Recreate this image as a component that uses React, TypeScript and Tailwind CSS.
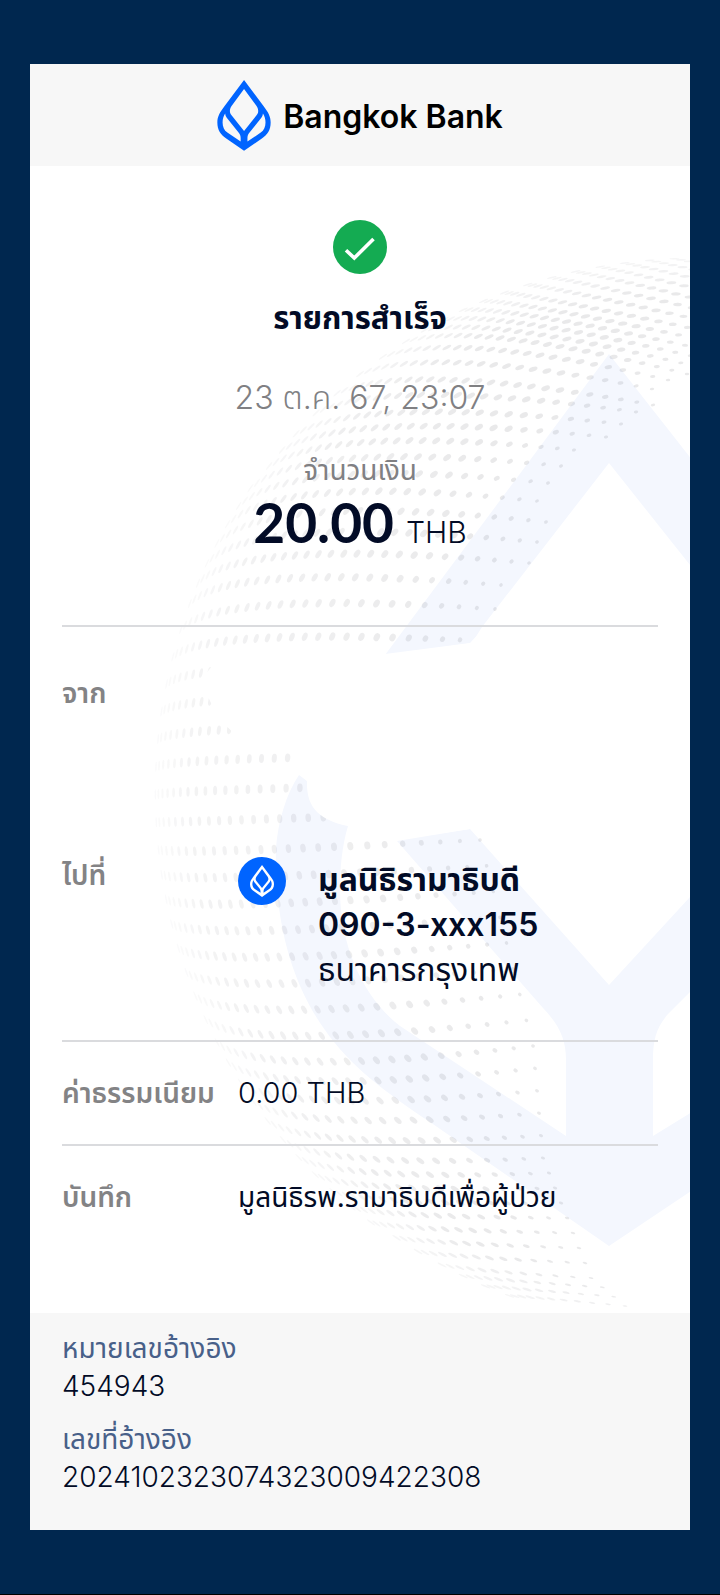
import React from "react";

const LOTUS =
  "M26.7 0 L46.5 26.5 C51 32.5 53.3 36.5 53.3 42.5 C53.3 50 50 54.8 44.5 58.5 L26.7 70.8 L8.9 58.5 C3.4 54.8 0 50 0 42.5 C0 36.5 2.4 32.5 6.9 26.5 Z " +
  "M26.7 9 L14.2 26 C12 29.5 12 32.5 14.2 35.3 L26.7 51 L39.2 35.3 C41.4 32.5 41.4 29.5 39.2 26 Z " +
  "M7.8 33.5 C4 39.5 4.2 48.5 10 52.6 L23.3 61.6 L23.3 58 C23.3 55.6 22.6 54.2 21.2 52.4 L9.4 37.8 C8.4 36.4 7.9 35 7.8 33.5 Z " +
  "M45.6 33.5 C49.4 39.5 49.2 48.5 43.4 52.6 L30.1 61.6 L30.1 58 C30.1 55.6 30.8 54.2 32.2 52.4 L44 37.8 C45 36.4 45.5 35 45.6 33.5 Z";

function Lotus({ className }: { className: string }) {
  return (
    <svg viewBox="0 0 53.3 71" className={className} fill="currentColor" aria-hidden="true">
      <path fillRule="evenodd" d={LOTUS} />
    </svg>
  );
}

type Dot = { x: number; y: number; rx: number; ry: number; angle: number; opacity: number };

const CX = 690;
const CY = 793;
const R = 536;

/* Each row of the globe: [row, inner end x, inner end y, slope at the inner end, spacing]. */
const ANCHORS: number[][] = [
  [-14, 810, 278, 0.12, 17],
  [-1, 687, 374, 0.25, 16],
  [4, 621, 424, 0.16, 17],
  [13, 501, 585, 0.08, 18],
  [22, 480, 840, -0.05, 20],
  [30, 533, 1046, -0.12, 20],
  [35, 543, 1158, -0.05, 19],
  [43, 591, 1278, 0.06, 18],
  [46, 625, 1306, 0.1, 17],
];
/* Rim angle in degrees above (+) or below (-) the horizontal, per anchor row. */
const RIM = [90, 56, 40.5, 20, -6, -27, -39.5, -61, -70];
const ENDS: Record<number, [number, number]> = {
  0: [668, 380], 1: [652, 389], 2: [653, 405], 3: [636, 412], 4: [621, 424], 5: [606, 437],
  6: [574, 450], 7: [561, 466], 8: [548, 483], 9: [537, 501], 10: [546, 522], 11: [537, 542],
  12: [529, 563], 13: [501, 585], 14: [495, 609],
};
/* Below 1, dots stay further apart toward the rim. */
const SPREAD = 0.82;

function buildDots(): Dot[] {
  const dots: Dot[] = [];
  for (let row = -14; row <= 46; row++) {
    let a = 0;
    while (a < ANCHORS.length - 2 && row > ANCHORS[a + 1][0]) a++;
    const k = (row - ANCHORS[a][0]) / (ANCHORS[a + 1][0] - ANCHORS[a][0]);
    const mix = (i: number) => ANCHORS[a][i] + (ANCHORS[a + 1][i] - ANCHORS[a][i]) * k;
    const rim = ((RIM[a] + (RIM[a + 1] - RIM[a]) * k) * Math.PI) / 180;
    const [ex, ey] = ENDS[row] ?? [mix(1), mix(2)];
    const slope = mix(3);
    const x0 = CX - R * Math.cos(rim);
    const y0 = CY - R * Math.sin(rim);
    const tx = Math.sin(rim);
    const ty = -Math.cos(rim);
    const det = ty - slope * tx;
    let s = (ey + slope * (x0 - ex) - y0) / det;
    s = Math.max(row < 20 ? 8 : -120, Math.min(70, s));
    const x1 = x0 + tx * s;
    const y1 = y0 + ty * s;
    const n = Math.max(8, Math.round((2 * SPREAD * Math.hypot(ex - x1, ey - y1)) / mix(4)));
    for (let i = 0; i < n; i++) {
      const t = Math.pow(1 - i / n, SPREAD);
      const x = (1 - t) * (1 - t) * x0 + 2 * t * (1 - t) * x1 + t * t * ex;
      const y = (1 - t) * (1 - t) * y0 + 2 * t * (1 - t) * y1 + t * t * ey;
      const d = Math.hypot(x - CX, y - CY) / R;
      if (x > 700 || d > 0.998) continue;
      const grow = Math.min(1, 0.5 + i * 0.08);
      const depth = Math.sqrt(1 - d * d);
      const low = Math.max(0, Math.min(1, (x - 150) / 330));
      dots.push({
        x,
        y,
        rx: (0.5 + 3.3 * depth) * grow,
        ry: (2.6 + 2.4 * d) * grow,
        angle: (Math.atan2(y - CY, x - CX) * 180) / Math.PI,
        opacity: (0.07 + 0.08 * low) * Math.min(1, 0.4 + (1 - d) * 9),
      });
    }
  }
  return dots;
}

const DOTS = buildDots();

function Watermark() {
  return (
    <svg
      viewBox="30 166 660 1148"
      preserveAspectRatio="xMaxYMin slice"
      className="absolute inset-0 h-full w-full"
      aria-hidden="true"
    >
      <g fill="#f4f7fe">
        <path d="M609 354 L385 655 L472 643 L482 627 L609 463 L690 565 L700 578 L700 470 Z" />
        <path d="M299 775 C286 794 278 822 276 848 C274 930 296 990 325 1030 C350 1066 385 1092 430 1122 L609 1246 L700 1185 L700 1107 L653 1136 L653 1060 C653 1040 656 1028 668 1014 L700 982 L700 886 L609 985 L470 829 L397 841 L543 1008 C560 1026 566 1040 566 1060 L566 1136 L400 1026 C366 1000 340 950 340 890 C340 868 342 846 348 826 L307 781 Z" />
      </g>
      <g fill="#6b6b72">
        {DOTS.map((d, i) => (
          <ellipse
            key={i}
            cx={d.x.toFixed(1)}
            cy={d.y.toFixed(1)}
            rx={d.rx.toFixed(2)}
            ry={d.ry.toFixed(2)}
            opacity={d.opacity.toFixed(3)}
            transform={`rotate(${d.angle.toFixed(1)} ${d.x.toFixed(1)} ${d.y.toFixed(1)})`}
          />
        ))}
      </g>
      <path
        fill="#ffffff"
        d="M222 654 L385 654 L470 643 L510 600 L690 600 L690 829 L470 829 L397 840 L348 826 C320 820 306 808 307 781 L299 772 L290 742 L240 738 C215 720 203 690 204 676 Z"
      />
    </svg>
  );
}

const label = "w-44 shrink-0 text-[28px] leading-9 font-semibold text-[#838385]";

export default function App() {
  return (
    <div className="border-b border-black bg-[#00274f] px-[30px] pt-16 pb-16 font-['Inter','Noto_Sans_Thai',sans-serif] text-[#020b26]">
      <article className="bg-white">
        <header className="flex h-[102px] items-center justify-center gap-3 bg-[#f7f7f7]">
          <Lotus className="h-[71px] w-[54px] text-[#0064ff]" />
          <h1 className="pt-1 text-[32px] leading-10 font-semibold text-black">Bangkok Bank</h1>
        </header>

        <main className="relative overflow-hidden">
          <Watermark />
          <div className="relative px-8 pt-[54px] pb-[98px]">
            <section className="flex flex-col items-center text-center">
              <svg viewBox="0 0 54 54" className="h-[54px] w-[54px]" aria-hidden="true">
                <circle cx="27" cy="27" r="27" fill="#14ab52" />
                <path d="M13 30.2 L21.3 38 L40.5 19" fill="none" stroke="#fff" strokeWidth="3.6" />
              </svg>
              <h2 className="mt-6 text-[31px] leading-10 font-bold">รายการสำเร็จ</h2>
              <time dateTime="2024-10-23T23:07" className="mt-10 text-[32px] leading-10 font-[350] text-[#808083]">
                23 ต.ค. 67, 23:07
              </time>
              <p className="mt-9 text-[28px] leading-8 text-[#808083]">จำนวนเงิน</p>
              <p className="mt-1 flex items-baseline gap-3 text-[30px] leading-[64px]">
                <span className="font-['Lato'] text-[55px] font-bold">20.00</span>
                <span className="font-[350]">THB</span>
              </p>
            </section>

            <dl className="mt-[61px]">
              <div className="flex min-h-[232px] border-t-2 border-[#dadbde] pt-12">
                <dt className={label}>จาก</dt>
                <dd />
              </div>
              <div className="flex pb-12">
                <dt className={label}>ไปที่</dt>
                <dd className="flex gap-8">
                  <span className="flex h-12 w-12 shrink-0 items-center justify-center rounded-full bg-[#0064ff]">
                    <Lotus className="h-8 w-6 text-white" />
                  </span>
                  <span className="flex flex-col text-[32px] leading-[45px]">
                    <strong className="font-bold">มูลนิธิรามาธิบดี</strong>
                    <strong className="font-semibold">090-3-xxx155</strong>
                    <span>ธนาคารกรุงเทพ</span>
                  </span>
                </dd>
              </div>
              <div className="flex border-t-2 border-[#dadbde] py-[33px]">
                <dt className={label}>ค่าธรรมเนียม</dt>
                <dd className="text-[29px] leading-9 font-[350]">0.00 THB</dd>
              </div>
              <div className="flex border-t-2 border-[#dadbde] pt-[33px]">
                <dt className={label}>บันทึก</dt>
                <dd className="text-[28px] leading-9">มูลนิธิรพ.รามาธิบดีเพื่อผู้ป่วย</dd>
              </div>
            </dl>
          </div>
        </main>

        <footer className="bg-[#f7f7f7] px-8 pt-4 pb-[34px]">
          <dl className="flex flex-col gap-[15px] text-[28px] leading-[38px]">
            <div>
              <dt className="text-[#486089]">หมายเลขอ้างอิง</dt>
              <dd className="font-[350]">454943</dd>
            </div>
            <div>
              <dt className="text-[#486089]">เลขที่อ้างอิง</dt>
              <dd className="font-[350]">2024102323074323009422308</dd>
            </div>
          </dl>
        </footer>
      </article>
    </div>
  );
}
